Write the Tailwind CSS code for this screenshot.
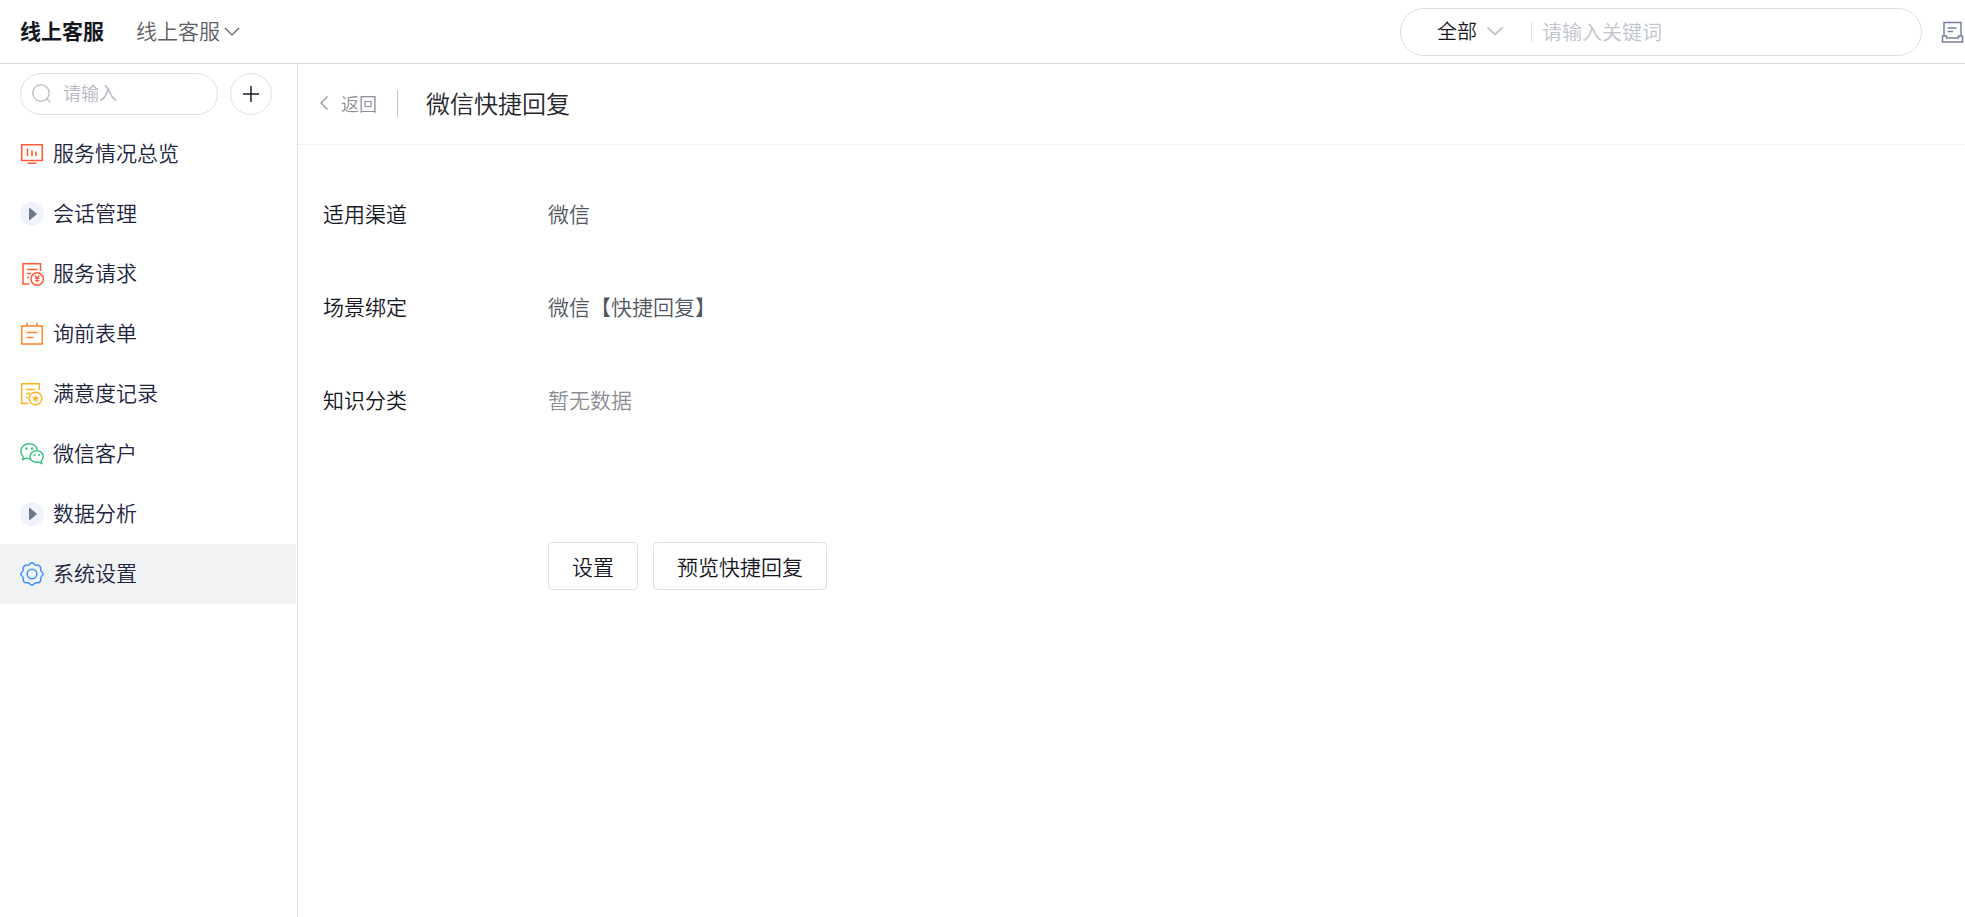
<!DOCTYPE html>
<html lang="zh-CN">
<head>
    <meta charset="UTF-8">
    <meta name="viewport" content="width=device-width, initial-scale=1.0">
    <title>线上客服</title>
    <script src="https://cdn.jsdelivr.net/npm/@tailwindcss/browser@4"></script>
</head>
<body class="flex flex-col min-h-screen overflow-x-hidden bg-white font-['Noto_Sans_CJK_SC',sans-serif] font-[350] text-[21px] leading-8 text-[#15171f]">

    <!-- 顶部栏 -->
    <header class="flex items-center h-16 shrink-0 pl-5 pr-px border-b border-[#dcdde0]">
        <h1 class="pb-1 font-bold">线上客服</h1>
        <button type="button" class="flex items-center ml-8 pb-1 text-[#5c5f66]">
            线上客服
            <svg class="w-4 h-4 ml-1 mt-1" viewBox="0 0 16 16" fill="none" stroke="currentColor" stroke-width="1.2"><path d="M1 4l7 7 7-7"/></svg>
        </button>

        <form class="flex items-center w-[522px] h-12 ml-auto pl-9 pr-6 border border-[#dcdde6] rounded-full text-xl">
            <button type="button" class="flex items-center pb-0.5">
                全部
                <svg class="w-4 h-4 ml-[10px]" viewBox="0 0 16 16" fill="none" stroke="#c0c4cc" stroke-width="1.8"><path d="M0.500 4.500l7.500 7 7.500-7"/></svg>
            </button>
            <span class="w-px h-5 ml-7 bg-[#dcdfe6]"></span>
            <input type="text" aria-label="关键词" placeholder="请输入关键词" class="flex-1 min-w-0 h-8 ml-[10px] outline-none placeholder:text-[#c0c4cc]">
        </form>
        <button type="button" aria-label="消息" class="ml-[19px] pt-0.5 text-[#76809a]">
            <svg class="w-[23px] h-[23px]" viewBox="0 0 23 23" fill="none" stroke="currentColor" stroke-width="1.5"><path d="M3 14.500V1.500h17v13M1.500 15h4v2h12v-2h4v6h-20zM6.500 7h9M6.500 10.500h5.500"/></svg>
        </button>
    </header>

    <div class="flex flex-1">
        <!-- 侧边栏 -->
        <aside class="w-[298px] shrink-0 border-r border-[#dcdde0]">
            <div class="flex items-center gap-3 py-[9px] pl-5">
                <label class="flex items-center w-[198px] h-[42px] pl-[11px] pr-3 pb-1 border border-[#dfe1ea] rounded-full text-lg">
                    <svg class="w-[19px] h-[19px] shrink-0 mt-0.5" viewBox="0 0 19 19" fill="none" stroke="#c0c4cc" stroke-width="1.5"><circle cx="9" cy="9" r="8.200"/><path d="M14.800 14.800l3.500 3.500"/></svg>
                    <input type="text" aria-label="搜索" placeholder="请输入" class="w-full min-w-0 ml-3 outline-none placeholder:text-[#b4b8c2]">
                </label>
                <button type="button" aria-label="新增" class="flex items-center justify-center w-[42px] h-[42px] border border-[#dfe1ea] rounded-full">
                    <svg class="w-4 h-4" viewBox="0 0 16 16" fill="none" stroke="#1b1d29" stroke-width="1.500"><path d="M8 0v16M0 8h16"/></svg>
                </button>
            </div>

            <nav class="pr-px text-[#20243f]">
                <a href="#" class="flex items-center gap-[9px] h-[60px] pl-5 pb-1">
                    <svg class="w-6 h-6 mt-1" viewBox="0 0 24 24" fill="none" stroke="#ff5a36" stroke-width="1.600"><path d="M1.700 2.700h20.600v15.800H1.700zM7.500 6.500v7.500M12 8.500V14M16 9.500V14M7.500 21.200h9"/></svg>
                    服务情况总览
                </a>
                <a href="#" class="flex items-center gap-[9px] h-[60px] pl-5 pb-1">
                    <svg class="w-6 h-6 mt-1" viewBox="0 0 24 24"><circle cx="12" cy="12" r="12" fill="#f0f3fb"/><path d="M9 6.500q0-1 1-.5l6.500 5.500q.6.500 0 1L10 18q-1 .5-1-.5z" fill="#70788c"/></svg>
                    会话管理
                </a>
                <a href="#" class="flex items-center gap-[9px] h-[60px] pl-5 pb-1">
                    <svg class="w-6 h-6 mt-1" viewBox="0 0 24 24" fill="none" stroke="#ff5a36" stroke-width="1.500"><path d="M9.500 22H3V1.700h17.500V9M7 7.500h10.500M7 11.500h4M7 15.500h2"/><circle cx="17.200" cy="17" r="6.200"/><path d="M15 13.500l2.200 2.500 2.200-2.500M17.200 16v4.500M15 16.300h4.400M15 18.500h4.400" stroke-width="1.200"/></svg>
                    服务请求
                </a>
                <a href="#" class="flex items-center gap-[9px] h-[60px] pl-5 pb-1">
                    <svg class="w-6 h-6 mt-1" viewBox="0 0 24 24" fill="none" stroke="#ff8326" stroke-width="1.500"><path d="M1.700 4h20.600v18H1.700zM7 .5v4M17 .5v4M6.500 10.500h11M6.500 15.500h7"/></svg>
                    询前表单
                </a>
                <a href="#" class="flex items-center gap-[9px] h-[60px] pl-5 pb-1">
                    <svg class="w-6 h-6 mt-1" viewBox="0 0 24 24" fill="none" stroke="#ffb31f" stroke-width="1.500"><path d="M8 21.500H1.700V1.700h17.600V8M6 7.500h9M6 11.500h4M6 15.500h2"/><circle cx="15.500" cy="16.500" r="6.300"/><path d="M15.500 13l1 2.300 2.500.2-1.900 1.700.6 2.500-2.200-1.300-2.200 1.300.6-2.500-1.900-1.700 2.500-.2z" fill="#ffb31f" stroke="none"/></svg>
                    满意度记录
                </a>
                <a href="#" class="flex items-center gap-[9px] h-[60px] pl-5 pb-1">
                    <svg class="w-6 h-6 mt-1" viewBox="0 0 24 24" fill="none" stroke="#3fc380" stroke-width="1.500" stroke-linejoin="round"><path d="M10 16.700c-1.500.1-2.700-.1-4-.6L2.500 17.700l.6-3.300C1.500 13 .8 11.200.8 9.200 .8 5 4.500 1.700 9.200 1.700c4.200 0 7.600 2.600 8.300 6.200"/><path d="M16.700 8.700c3.700 0 6.600 2.500 6.600 5.800 0 1.800-.8 3.200-2.200 4.300l.9 2.900-3.100-1.600c-5 1.200-8.900-1.700-8.900-5.600 0-3.300 3-5.800 6.700-5.800z"/><g fill="#3fc380" stroke="none"><circle cx="6.500" cy="6.500" r="1.300"/><circle cx="12" cy="6.500" r="1.300"/><circle cx="14.500" cy="13" r="1.100"/><circle cx="19" cy="13" r="1.100"/></g></svg>
                    微信客户
                </a>
                <a href="#" class="flex items-center gap-[9px] h-[60px] pl-5 pb-1">
                    <svg class="w-6 h-6 mt-1" viewBox="0 0 24 24"><circle cx="12" cy="12" r="12" fill="#f0f3fb"/><path d="M9 6.500q0-1 1-.5l6.500 5.500q.6.500 0 1L10 18q-1 .5-1-.5z" fill="#70788c"/></svg>
                    数据分析
                </a>
                <a href="#" aria-current="page" class="flex items-center gap-[9px] h-[60px] pl-5 pb-1 bg-[#f1f2f4]">
                    <svg class="w-6 h-6 mt-1" viewBox="0 0 24 24" fill="none" stroke="#3894ff" stroke-width="1.500" stroke-linejoin="round"><path d="M9.500 2.500Q12-.8 14.500 2.500Q15.500 3.500 17 3.200Q20.700 3 20.700 7Q20.500 8.500 21.500 9.500Q24.800 12 21.500 14.500Q20.500 15.500 20.800 17Q21 20.800 17 20.800Q15.500 20.500 14.500 21.500Q12 24.800 9.500 21.500Q8.500 20.500 7 20.800Q3 21 3.200 17Q3.500 15.500 2.500 14.500Q-.8 12 2.500 9.500Q3.500 8.500 3.200 7Q3 3.200 7 3.200Q8.500 3.500 9.500 2.500z"/><circle cx="12" cy="12" r="4.800"/></svg>
                    系统设置
                </a>
            </nav>
        </aside>

        <!-- 主内容 -->
        <main class="flex-1 min-w-0">
            <div class="flex items-center h-[81px] pl-[22px] pb-0.5 border-b border-[#f0f1f3]">
                <a href="#" class="flex items-center gap-[13px] text-lg text-[#8d9098]">
                    <svg class="w-2 h-[14px]" viewBox="0 0 8 14" fill="none" stroke="currentColor" stroke-width="1.200"><path d="M7.500 0.500L1 7l6.500 6.500"/></svg>
                    返回
                </a>
                <span class="w-px h-[27px] ml-5 bg-[#c0c4cc]"></span>
                <h2 class="ml-7 text-2xl text-[#24262b]">微信快捷回复</h2>
            </div>

            <dl class="grid grid-cols-[225px_1fr] gap-y-[61px] pt-[52px] pl-[25px]">
                <dt>适用渠道</dt>
                <dd class="text-[#52565e]">微信</dd>
                <dt>场景绑定</dt>
                <dd class="text-[#52565e]">微信【快捷回复】</dd>
                <dt>知识分类</dt>
                <dd class="text-[#8a8d94]">暂无数据</dd>
            </dl>

            <div class="flex gap-[15px] mt-[127px] pl-[250px]">
                <button type="button" class="h-12 px-[23px] border border-[#dfe0e8] rounded">设置</button>
                <button type="button" class="h-12 px-[23px] border border-[#dfe0e8] rounded">预览快捷回复</button>
            </div>
        </main>
    </div>
</body>
</html>
